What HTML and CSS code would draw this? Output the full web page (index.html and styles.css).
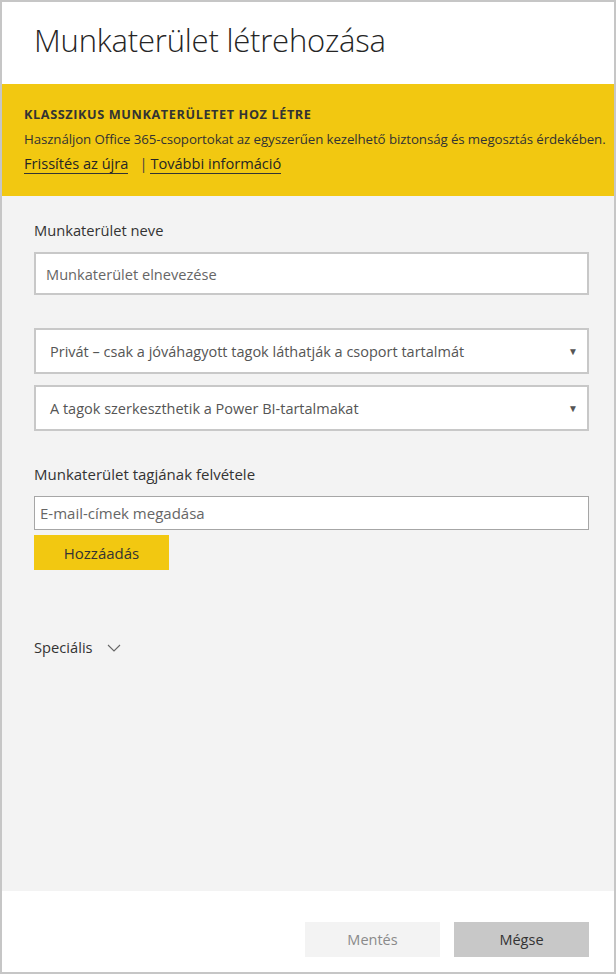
FILE: index.html
```html
<!DOCTYPE html>
<html lang="hu">
<head>
<meta charset="utf-8">
<title>Munkaterület létrehozása</title>
<link rel="stylesheet" href="styles.css">
</head>
<body>
<div class="panel">
  <header class="head">
    <h1 class="title">Munkaterület létrehozása</h1>
  </header>
  <section class="banner">
    <div class="banner-title">KLASSZIKUS MUNKATERÜLETET HOZ LÉTRE</div>
    <div class="banner-text">Használjon Office 365-csoportokat az egyszerűen kezelhető biztonság és megosztás érdekében.</div>
    <div class="banner-links">
      <a class="link">Frissítés az újra</a>
      <span class="sep">|</span>
      <a class="link">További információ</a>
    </div>
  </section>
  <main class="body">
    <label class="label">Munkaterület neve</label>
    <div class="input big"><span class="ph">Munkaterület elnevezése</span></div>
    <div class="selects">
      <div class="select"><span>Privát – csak a jóváhagyott tagok láthatják a csoport tartalmát</span><span class="arrow">▼</span></div>
      <div class="select"><span>A tagok szerkeszthetik a Power BI-tartalmakat</span><span class="arrow">▼</span></div>
    </div>
    <label class="label label2">Munkaterület tagjának felvétele</label>
    <div class="input email"><span class="ph2">E-mail-címek megadása</span></div>
    <button class="add">Hozzáadás</button>
    <div class="special">
      <span>Speciális</span>
      <svg class="chev" width="14" height="8" viewBox="0 0 14 8"><path d="M1 1 L7 7 L13 1" fill="none" stroke="#666" stroke-width="1.1"/></svg>
    </div>
  </main>
  <footer class="foot">
    <button class="btn save">Mentés</button>
    <button class="btn cancel">Mégse</button>
  </footer>
</div>
</body>
</html>
```
FILE: styles.css
```css
html, body {
  margin: 0;
  padding: 0;
}
body {
  font-family: "Open Sans", "Noto Sans", sans-serif;
  color: #333;
}
.panel {
  width: 616px;
  height: 974px;
  box-sizing: border-box;
  border: 2px solid #c6c6c6;
  display: flex;
  flex-direction: column;
  background: #fff;
}
.head {
  height: 82px;
  box-sizing: border-box;
  padding: 17px 0 0 32px;
}
.title {
  margin: 0;
  font-weight: 300;
  font-size: 31px;
  line-height: 42px;
  color: #252525;
  letter-spacing: -0.2px;
}
.banner {
  height: 112px;
  box-sizing: border-box;
  background: #f2c811;
  padding: 22px 0 0 22px;
}
.banner-title {
  font-size: 12.7px;
  font-weight: 700;
  line-height: 16px;
  color: #333;
  letter-spacing: 0.6px;
}
.banner-text {
  font-size: 13.3px;
  line-height: 18px;
  margin-top: 8px;
  color: #333;
  letter-spacing: -0.1px;
}
.banner-links {
  margin-top: 5px;
  font-size: 14.6px;
  line-height: 20px;
  color: #252525;
  display: flex;
  align-items: flex-start;
}
.link {
  border-bottom: 1.5px solid #333;
  padding-bottom: 0;
}
.sep {
  margin: 0 3px 0 11px;
  color: #444;
}
.body {
  flex: 1;
  background: #f3f3f3;
  padding: 24px 25px 0 32px;
  display: flex;
  flex-direction: column;
  align-items: flex-start;
}
.label {
  font-size: 14.7px;
  line-height: 21px;
  color: #333;
}
.input {
  align-self: stretch;
  background: #fff;
  box-sizing: border-box;
  display: flex;
  align-items: center;
}
.big {
  margin-top: 11px;
  height: 43px;
  border: 2px solid #c8c8c8;
  padding-left: 10px;
}
.ph {
  font-size: 14.6px;
  color: #666;
}
.selects {
  align-self: stretch;
  margin-top: 33px;
  display: flex;
  flex-direction: column;
  gap: 11px;
}
.select {
  height: 46px;
  box-sizing: border-box;
  background: #fff;
  border: 2px solid #c8c8c8;
  padding: 0 9px 0 14px;
  display: flex;
  align-items: center;
  justify-content: space-between;
  font-size: 14.5px;
  color: #555;
}
.arrow {
  font-size: 10px;
  color: #555;
}
.label2 {
  margin-top: 33px;
  font-size: 15px;
}
.email {
  margin-top: 11px;
  height: 34px;
  border: 1px solid #a6a6a6;
  padding-left: 5px;
}
.ph2 {
  font-size: 15px;
  color: #666;
}
.add {
  margin-top: 5px;
  width: 135px;
  height: 35px;
  border: none;
  background: #f2c811;
  font-family: inherit;
  font-size: 15px;
  color: #333;
  padding: 0;
}
.special {
  margin-top: 67px;
  display: flex;
  align-items: center;
  gap: 14px;
  font-size: 14.7px;
  color: #333;
}
.chev {
  margin-top: 1px;
}
.foot {
  height: 81px;
  box-sizing: border-box;
  padding: 31px 25px 0 0;
  display: flex;
  justify-content: flex-end;
  align-items: flex-start;
  gap: 14px;
}
.btn {
  width: 135px;
  height: 35px;
  border: none;
  font-family: inherit;
  font-size: 14.5px;
  padding: 0;
}
.save {
  background: #f3f3f3;
  color: #8a8a8a;
}
.cancel {
  background: #c8c8c8;
  color: #333;
}
```
